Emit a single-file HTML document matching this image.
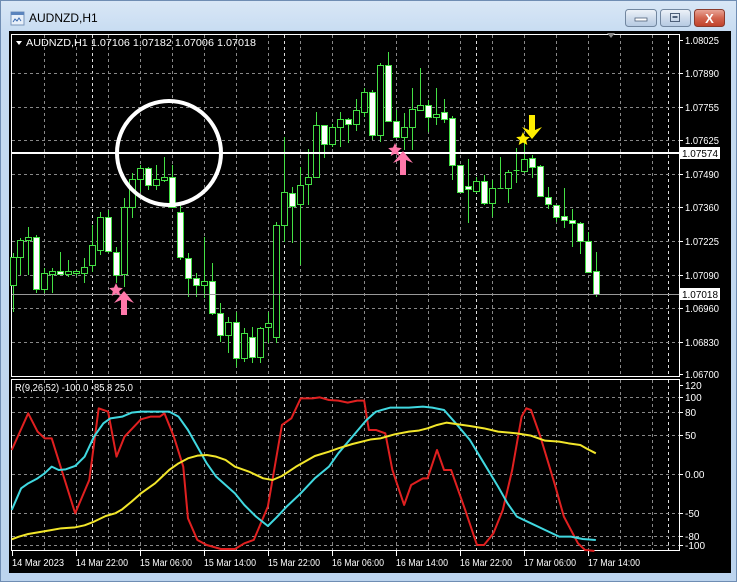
<!DOCTYPE html>
<html><head><meta charset="utf-8"><style>
html,body{margin:0;padding:0;width:737px;height:582px;overflow:hidden;background:#c8dcf1;}
</style></head><body>
<svg id="s" width="737" height="582" viewBox="0 0 737 582" xmlns="http://www.w3.org/2000/svg" font-family="Liberation Sans, sans-serif">
<defs>
<linearGradient id="fr" x1="0" y1="0" x2="0" y2="1"><stop offset="0" stop-color="#d9e7f6"/><stop offset="0.06" stop-color="#c6dbf1"/><stop offset="1" stop-color="#bcd4ee"/></linearGradient>
<linearGradient id="bt" x1="0" y1="0" x2="0" y2="1"><stop offset="0" stop-color="#eef3f9"/><stop offset="0.5" stop-color="#cfdcec"/><stop offset="1" stop-color="#b5c9e2"/></linearGradient>
<linearGradient id="bc" x1="0" y1="0" x2="0" y2="1"><stop offset="0" stop-color="#e9a89a"/><stop offset="0.5" stop-color="#d2654f"/><stop offset="1" stop-color="#c0412a"/></linearGradient>
</defs>
<rect x="0" y="0" width="737" height="582" fill="url(#fr)"/>
<rect x="0.5" y="0.5" width="736" height="581" fill="none" stroke="#6f8db3"/>
<rect x="11" y="12" width="13" height="13" fill="#e8f0fa" stroke="#7a96bb"/>
<rect x="11" y="12" width="13" height="3" fill="#5b84bd"/>
<path d="M13,22 l2,-3 l2,2 l2,-3 l2,3" stroke="#3a6ab0" fill="none"/>
<text x="29" y="22" font-size="12" fill="#000">AUDNZD,H1</text>
<rect x="625.5" y="9.5" width="31" height="17" rx="3" fill="url(#bt)" stroke="#71869f"/>
<rect x="635" y="18" width="12" height="3" fill="#fff" stroke="#4d5f78" stroke-width="0.8"/>
<rect x="660.5" y="9.5" width="30" height="17" rx="3" fill="url(#bt)" stroke="#71869f"/>
<rect x="670.5" y="13.5" width="9" height="8" fill="none" stroke="#4d5f78"/><rect x="672.5" y="16" width="5" height="2" fill="#4d5f78"/>
<rect x="694.5" y="9.5" width="30" height="17" rx="3" fill="url(#bc)" stroke="#8a3a2c"/>
<text x="709.5" y="23" font-size="13" font-weight="bold" fill="#fff" text-anchor="middle">X</text>
<rect x="9" y="31" width="722" height="542" fill="#000"/>
<g id="grid" stroke="#888" stroke-dasharray="3,3" stroke-width="1"></g>
<rect x="11.5" y="34.5" width="668" height="342" fill="none" stroke="#fff"/>
<rect x="11.5" y="379.5" width="668" height="171" fill="none" stroke="#fff"/>
<g id="candles"></g>
<line x1="12" y1="153" x2="679" y2="153" stroke="#fff" stroke-width="2"/>
<line x1="12" y1="294.5" x2="679" y2="294.5" stroke="#999" stroke-width="1"/>
<circle cx="169" cy="153" r="52" fill="none" stroke="#fff" stroke-width="4"/>
<g fill="#ff78aa">
<path d="M116,283 l2,4.5 4.8,0.6 -3.6,3.2 1.1,4.7 -4.3,-2.5 -4.3,2.5 1.1,-4.7 -3.6,-3.2 4.8,-0.6z"/>
<path d="M124,291 l10,12 -7,-3 0,15 -6,0 0,-15 -7,3z"/>
<path d="M395,143 l2,4.5 4.8,0.6 -3.6,3.2 1.1,4.7 -4.3,-2.5 -4.3,2.5 1.1,-4.7 -3.6,-3.2 4.8,-0.6z"/>
<path d="M403,151 l10,12 -7,-3 0,15 -6,0 0,-15 -7,3z"/>
</g>
<g fill="#ffee00">
<path d="M523,132 l2,4.5 4.8,0.6 -3.6,3.2 1.1,4.7 -4.3,-2.5 -4.3,2.5 1.1,-4.7 -3.6,-3.2 4.8,-0.6z"/>
<path d="M532,139 l10,-12 -7,3 0,-15 -6,0 0,15 -7,-3z"/>
</g>
<g fill="none" stroke-width="2" stroke-linejoin="round" transform="translate(0,370) scale(0.4699,0.3333)">
<polyline vector-effect="non-scaling-stroke" stroke="#e02020" points="25,240 60,130 80,185 95,205 110,205 160,430 190,330 210,115 230,125 248,260 265,200 300,148 320,140 340,140 350,130 370,200 390,290 400,445 420,510 440,525 470,537 500,537 520,520 540,510 570,410 600,165 620,145 640,85 665,85 680,82 700,90 720,92 740,98 760,92 775,92 785,180 800,180 820,190 835,300 860,405 875,345 900,325 910,325 930,240 945,300 960,300 990,420 1015,525 1030,525 1050,490 1070,420 1090,300 1110,140 1120,115 1130,120 1150,200 1180,340 1200,440 1230,520 1245,540 1265,543"/>
<polyline vector-effect="non-scaling-stroke" stroke="#40d8e0" points="25,420 45,355 60,340 80,325 95,310 110,290 125,300 140,298 160,288 180,260 200,200 220,160 235,145 260,140 280,128 300,125 340,125 360,125 380,140 400,180 420,230 440,280 460,320 480,345 500,370 520,405 545,440 570,468 590,440 610,410 640,370 670,325 700,290 720,250 750,200 780,150 800,125 830,113 870,113 900,110 920,113 945,120 970,160 1000,210 1030,280 1060,350 1080,400 1100,440 1130,460 1160,480 1190,500 1215,500 1240,507 1268,510"/>
<polyline vector-effect="non-scaling-stroke" stroke="#f2e62a" points="25,508 40,500 60,492 90,485 110,480 130,475 160,472 180,466 200,455 225,438 245,430 260,418 280,395 300,370 330,340 360,300 380,280 400,265 420,257 440,255 460,260 480,270 500,290 530,305 560,325 580,330 600,318 630,290 670,258 700,245 720,235 750,222 790,208 810,205 840,193 870,185 890,182 910,175 930,165 950,158 970,162 1000,168 1030,175 1060,185 1100,190 1130,197 1160,212 1190,215 1210,220 1235,225 1250,237 1268,250"/>
</g>
<path d="M607,33 l8,0 -4,5z" fill="#888"/>
<g font-size="10" fill="#fff">
<path d="M16,41 l6,0 -3,4z" fill="#fff"/>
<text x="26" y="46" textLength="230" lengthAdjust="spacingAndGlyphs">AUDNZD,H1  1.07106 1.07182 1.07006 1.07018</text>
<text x="15" y="391" textLength="118" lengthAdjust="spacingAndGlyphs">R(9,26,52) -100.0 -85.8 25.0</text>
</g>
<g id="labels" font-size="10" fill="#fff"></g>
<rect x="680" y="147" width="40" height="12" fill="#fff"/>
<text x="682" y="157" font-size="10" fill="#000" textLength="36" lengthAdjust="spacingAndGlyphs">1.07574</text>
<rect x="680" y="288" width="40" height="12" fill="#fff"/>
<text x="682" y="298" font-size="10" fill="#000" textLength="36" lengthAdjust="spacingAndGlyphs">1.07018</text>
</svg>
<script>
var NS="http://www.w3.org/2000/svg";
function el(p,t,a,txt){var e=document.createElementNS(NS,t);for(var k in a)e.setAttribute(k,a[k]);if(txt)e.textContent=txt;document.getElementById(p).appendChild(e);return e;}
for(var x=44;x<680;x+=32){var w=(x==92||x==284||x==476||x==668);if(w) continue;
el("grid","line",{x1:x+.5,y1:35,x2:x+.5,y2:377});el("grid","line",{x1:x+.5,y1:380,x2:x+.5,y2:551});}
[92,284,476,668].forEach(function(x){el("grid","line",{x1:x+.5,y1:35,x2:x+.5,y2:377,stroke:"#ddd"});el("grid","line",{x1:x+.5,y1:380,x2:x+.5,y2:551,stroke:"#ddd"});});
var ph=[[40,"1.08025"],[73,"1.07890"],[107,"1.07755"],[140,"1.07625"],[174,"1.07490"],[207,"1.07360"],[241,"1.07225"],[275,"1.07090"],[308,"1.06960"],[342,"1.06830"],[374,"1.06700"]];
ph.forEach(function(p){if(p[0]>40&&p[0]<374)el("grid","line",{x1:12,y1:p[0]+.5,x2:679,y2:p[0]+.5});el("labels","line",{x1:680,y1:p[0]+.5,x2:683,y2:p[0]+.5,stroke:"#fff"});el("labels","text",{x:685,y:p[0]+4,textLength:34,lengthAdjust:"spacingAndGlyphs"},p[1]);});
var ih=[[385,"120"],[397,"100"],[412,"80"],[435,"50"],[474,"0.00"],[513,"-50"],[536,"-80"],[545,"-100"]];
ih.forEach(function(p){if(p[0]>385)el("grid","line",{x1:12,y1:p[0]+.5,x2:679,y2:p[0]+.5});el("labels","line",{x1:680,y1:p[0]+.5,x2:683,y2:p[0]+.5,stroke:"#fff"});el("labels","text",{x:685,y:p[0]+4},p[1]);});
var tl=["14 Mar 2023","14 Mar 22:00","15 Mar 06:00","15 Mar 14:00","15 Mar 22:00","16 Mar 06:00","16 Mar 14:00","16 Mar 22:00","17 Mar 06:00","17 Mar 14:00"];
tl.forEach(function(t,i){var x=12+64*i;el("labels","line",{x1:x+.5,y1:551,x2:x+.5,y2:556,stroke:"#fff"});el("labels","text",{x:x,y:566,textLength:52,lengthAdjust:"spacingAndGlyphs"},t);});
var C=[[13,253,312,257,285,0],[20,238,275,240,257,0],[28,227,275,237,240,0],[36,235,293,237,289,1],[44,268,293,273,289,0],[52,268,293,271,274,0],[60,252,275,271,274,1],[68,260,277,271,274,0],[76,270,276,271,273,0],[84,258,283,267,273,0],[92,225,272,245,265,0],[100,212,255,217,250,0],[108,210,253,217,251,1],[116,247,283,252,275,1],[124,198,287,207,274,0],[132,173,218,179,207,0],[140,165,192,168,179,0],[148,167,190,168,185,1],[156,165,190,179,185,0],[164,157,182,177,180,0],[172,165,208,177,207,1],[180,205,260,212,257,1],[188,253,297,258,278,1],[196,273,297,278,285,1],[204,237,298,281,285,0],[212,263,315,281,313,1],[220,303,342,313,335,1],[228,317,353,322,335,0],[236,312,367,322,358,1],[244,328,362,333,358,0],[252,327,363,337,357,1],[260,327,363,328,357,0],[268,312,343,323,327,0],[276,222,343,225,337,0],[284,137,242,192,225,0],[292,187,243,193,206,1],[300,167,265,185,204,0],[308,149,205,177,184,0],[316,112,177,125,177,0],[324,125,158,125,144,1],[332,124,147,127,144,0],[340,112,147,119,127,0],[348,118,143,119,124,1],[356,99,131,110,124,0],[364,88,117,92,112,0],[372,90,140,92,135,1],[380,63,142,65,135,0],[388,52,121,65,121,1],[396,110,138,121,137,1],[404,113,150,127,137,0],[412,88,150,109,127,0],[420,68,110,105,110,0],[428,100,132,105,117,1],[436,88,125,114,117,0],[444,99,123,112,119,1],[452,116,180,118,165,1],[460,165,192,165,192,1],[468,159,223,186,189,1],[476,177,193,181,191,0],[484,175,205,181,203,1],[492,180,217,188,203,0],[500,157,189,188,189,0],[508,170,203,172,188,0],[516,148,183,170,171,0],[524,138,173,159,171,0],[532,155,178,158,167,1],[540,165,197,166,196,1],[548,187,209,197,204,1],[556,205,222,205,217,1],[564,188,228,216,220,1],[572,209,247,220,223,1],[580,222,254,223,241,1],[588,232,272,241,272,1],[596,252,297,271,294,1]];
C.forEach(function(c){var x=c[0];el("candles","line",{x1:x+.5,y1:c[1],x2:x+.5,y2:c[2],stroke:"#44e044"});var h=Math.max(c[4]-c[3],1);
if(h<=1){el("candles","line",{x1:x-2.5,y1:c[3]+.5,x2:x+3.5,y2:c[3]+.5,stroke:"#44e044"});}
else el("candles","rect",{x:x-2.5,y:c[3]+.5,width:6,height:h,fill:c[5]?"#fff":"#000",stroke:"#44e044"});});
</script>
</body></html>
